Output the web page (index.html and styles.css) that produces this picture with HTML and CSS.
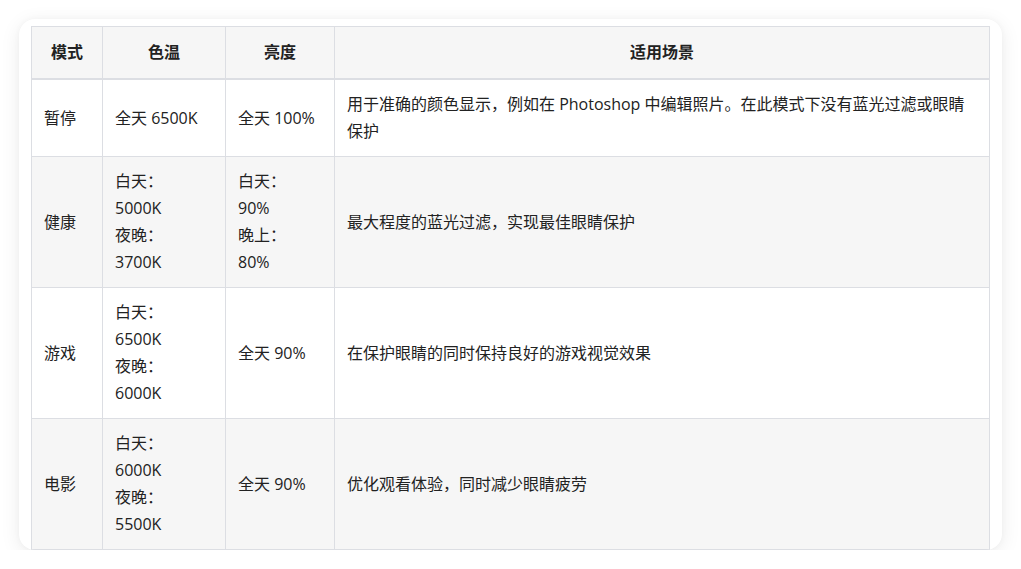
FILE: index.html
```html
<!DOCTYPE html>
<html lang="zh-CN">
<head>
<meta charset="utf-8">
<title>护眼模式</title>
<link rel="stylesheet" href="styles.css">
</head>
<body>
<div class="card">
  <table class="modes">
    <colgroup>
      <col class="c-mode">
      <col class="c-temp">
      <col class="c-bright">
      <col class="c-scene">
    </colgroup>
    <thead>
      <tr>
        <th>模式</th>
        <th>色温</th>
        <th>亮度</th>
        <th>适用场景</th>
      </tr>
    </thead>
    <tbody>
      <tr>
        <td>暂停</td>
        <td>全天 6500K</td>
        <td>全天 100%</td>
        <td>用于准确的颜色显示，例如在 Photoshop 中编辑照片。在此模式下没有蓝光过滤或眼睛保护</td>
      </tr>
      <tr>
        <td>健康</td>
        <td>白天：<br>5000K<br>夜晚：<br>3700K</td>
        <td>白天：<br>90%<br>晚上：<br>80%</td>
        <td>最大程度的蓝光过滤，实现最佳眼睛保护</td>
      </tr>
      <tr>
        <td>游戏</td>
        <td>白天：<br>6500K<br>夜晚：<br>6000K</td>
        <td>全天 90%</td>
        <td>在保护眼睛的同时保持良好的游戏视觉效果</td>
      </tr>
      <tr>
        <td>电影</td>
        <td>白天：<br>6000K<br>夜晚：<br>5500K</td>
        <td>全天 90%</td>
        <td>优化观看体验，同时减少眼睛疲劳</td>
      </tr>
    </tbody>
  </table>
</div>
</body>
</html>
```

FILE: styles.css
```css
html, body {
  margin: 0;
  padding: 0;
  background: #ffffff;
}

body {
  font-family: "Open Sans", "Noto Sans CJK SC", sans-serif;
  color: #222222;
  font-size: 16px;
}

.card {
  box-sizing: border-box;
  margin: 19px 0 0 19px;
  width: 983px;
  height: 531px;
  overflow: hidden;
  border-radius: 16px;
  background: #ffffff;
  box-shadow: 0 4px 20px rgba(0, 0, 0, 0.08), 0 0 6px rgba(0, 0, 0, 0.03);
  padding: 7px 13px 0 12px;
}

.modes {
  width: 958px;
  border-collapse: collapse;
  table-layout: fixed;
}

.c-mode { width: 71px; }
.c-temp { width: 123px; }
.c-bright { width: 109px; }
.c-scene { width: 655px; }

.modes th,
.modes td {
  border: 1px solid #dcdee3;
  line-height: 27px;
  vertical-align: middle;
}

.modes th {
  background: #f6f6f6;
  font-weight: 700;
  text-align: center;
  padding: 12px 12px;
  border-bottom: 2px solid #dcdee3;
}

.modes td {
  padding: 11px 12px;
  text-align: left;
}

.modes tbody tr:nth-child(even) td {
  background: #f6f6f6;
}
```
